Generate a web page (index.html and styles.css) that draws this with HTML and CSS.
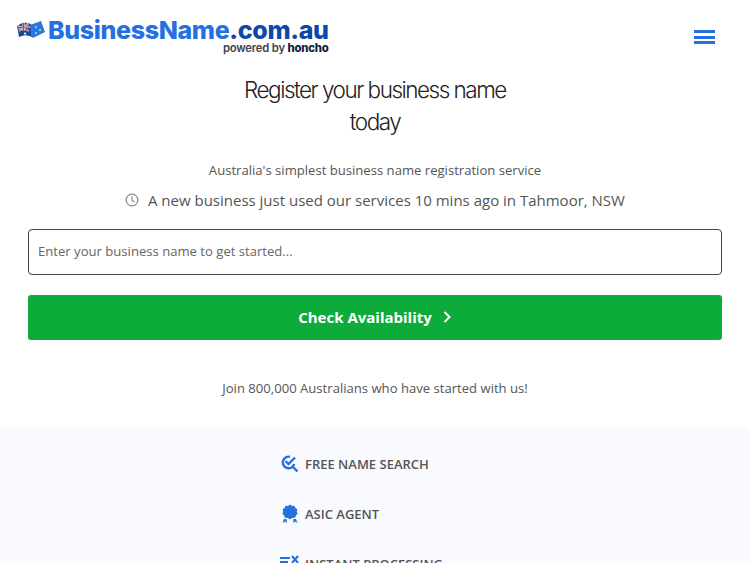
FILE: index.html
```html
<!DOCTYPE html>
<html lang="en">
<head>
    <meta charset="UTF-8">
    <title>BusinessName.com.au</title>
    <link rel="stylesheet" href="styles.css">
</head>
<body>
    <header class="topbar">
        <a class="logo" href="#">
            <svg class="flag" width="29" height="20" viewBox="0 0 29 20">
                <path d="M1 6 L6 3 Q10 2 15 4 L16 17 Q10 14 6 16 L3 17 Z" fill="#17498f"/>
                <path d="M14 5 L25 1 L29 12 L17 18 L15 16 Z" fill="#2a78d8"/>
                <path d="M2 6 L13 11 M13 3 L3 11" stroke="#e8e8ee" stroke-width="1.8"/>
                <path d="M2 6 L13 11 M13 3 L3 11" stroke="#d23040" stroke-width="0.8"/>
                <path d="M7.5 3 L7.5 11 M2 7.5 L14 7" stroke="#e8e8ee" stroke-width="2.2"/>
                <path d="M7.5 3 L7.5 11 M2 7.5 L14 7" stroke="#d23040" stroke-width="1.2"/>
                <circle cx="9" cy="13.5" r="1.1" fill="#fff"/>
                <circle cx="20" cy="7" r="0.9" fill="#cfe2fa"/>
                <circle cx="24" cy="10" r="0.9" fill="#cfe2fa"/>
                <circle cx="20" cy="13" r="0.9" fill="#cfe2fa"/>
            </svg>
            <span class="logo-text">
                <span class="logo-name">BusinessName<b>.com.au</b></span>
                <span class="logo-sub">powered by <b>honcho</b></span>
            </span>
        </a>
        <a class="menu-btn" href="#"><span></span><span></span><span></span></a>
    </header>

    <section class="hero">
        <h1>Register your business name<br>today</h1>
        <p class="lead">Australia's simplest business name registration service</p>
        <p class="recent">
            <svg width="14" height="14" viewBox="0 0 14 14" fill="none" stroke="#8a8a8a" stroke-width="1.2">
                <circle cx="7" cy="7" r="5.9"/>
                <path d="M7 3.2 V7.2 L9.6 8.9"/>
            </svg>
            A new business just used our services 10 mins ago in Tahmoor, NSW
        </p>
        <form class="search">
            <input type="text" placeholder="Enter your business name to get started...">
            <button type="button">Check Availability
                <svg width="10" height="14" viewBox="0 0 10 14" fill="none" stroke="#fff" stroke-width="2">
                    <path d="M2.5 2 L7.5 7 L2.5 12"/>
                </svg>
            </button>
        </form>
        <p class="join">Join 800,000 Australians who have started with us!</p>
    </section>

    <section class="features">
        <ul>
            <li>
                <svg width="18" height="18" viewBox="0 0 18 18" fill="none" stroke="#2470e0" stroke-width="2.4">
                    <path d="M9 1.8 A5.8 5.8 0 1 0 13.2 9"/>
                    <path d="M4.5 6 L7.5 9 L14 2.5"/>
                    <path d="M11.5 11.5 L16.5 16.5"/>
                </svg>
                FREE NAME SEARCH
            </li>
            <li>
                <svg width="18" height="20" viewBox="0 0 18 20" fill="#2470e0">
                    <path d="M9 0.5 L11 2 L13.4 1.8 L14.4 4 L16.4 5.2 L15.8 7.6 L16.6 9.8 L14.8 11.4 L14.2 13.8 L11.8 13.8 L9 15.2 L6.2 13.8 L3.8 13.8 L3.2 11.4 L1.4 9.8 L2.2 7.6 L1.6 5.2 L3.6 4 L4.6 1.8 L7 2 Z"/>
                    <path d="M3 15 L5.5 15 L6 19 L4 17.5 L1.5 19 Z M12.5 15 L15 15 L16.5 19 L14 17.5 L12 19 Z"/>
                </svg>
                ASIC AGENT
            </li>
            <li>
                <svg class="wide-icon" width="20" height="18" viewBox="0 0 20 18" fill="none" stroke="#2470e0" stroke-width="2">
                    <path d="M0 3 H10 M0 7 H8 M2 11 H8"/>
                    <path d="M12 1 L18 8 M18 1 L12 8"/>
                </svg>
                INSTANT PROCESSING
            </li>
        </ul>
    </section>
</body>
</html>
```

FILE: styles.css
```css
html, body { margin: 0; padding: 0; height: 563px; overflow: hidden; }
body { font-family: "Open Sans", "Noto Sans", sans-serif; color: #555; background: #fff; }

.topbar { display: flex; justify-content: space-between; align-items: flex-start; height: 74px; padding: 17px 35px 0 16px; box-sizing: border-box; }
.logo { display: flex; align-items: flex-start; gap: 3px; text-decoration: none; }
.flag { margin-top: 3px; }
.logo-text { display: flex; flex-direction: column; align-items: flex-end; }
.logo-name { font-family: Inter, sans-serif; font-weight: 800; font-size: 25px; line-height: 26px; color: #2470e0; letter-spacing: -0.35px; }
.logo-name b { color: #0c48a8; font-weight: 800; }
.logo-sub { font-family: Inter, sans-serif; font-weight: 600; font-size: 11.3px; line-height: 11px; color: #444; letter-spacing: -0.2px; }
.logo-sub b { color: #13203f; font-weight: 800; }

.menu-btn { display: flex; flex-direction: column; gap: 2.5px; width: 21px; margin-top: 13px; }
.menu-btn span { display: block; height: 3px; background: #2470e0; }

.hero { padding: 0 28px; text-align: center; }
h1 { margin: 0; font-family: Inter, "Liberation Sans", sans-serif; font-weight: 300; font-size: 22.5px; line-height: 32px; color: #222; letter-spacing: -1.5px; }
.lead { margin: 22px 0 0; font-size: 13.1px; line-height: 20px; }
.recent { margin: 9px 0 0; font-size: 15px; line-height: 22px; color: #555; }
.recent svg { vertical-align: -1px; margin-right: 5px; }

.search { margin-top: 18px; display: flex; flex-direction: column; gap: 20px; }
.search input { height: 46px; box-sizing: border-box; padding: 0 9px 2px; border: 1px solid #444; border-radius: 4px; font-family: inherit; font-size: 13.1px; color: #555; background: #fff; }
.search input::placeholder { color: #666; opacity: 1; }
.search button { display: flex; justify-content: center; align-items: center; gap: 10px; height: 45px; padding: 0 0 2px; border: 0; border-radius: 3px; background: #0cab3a; color: #fff; font-family: inherit; font-weight: 700; font-size: 15px; }
.join { margin: 38px 0 0; font-size: 13.1px; line-height: 20px; }

.features { margin-top: 30px; height: 135px; background: #f9fafd; }
.features ul { list-style: none; margin: 0; padding: 25px 0 0 281px; }
.features li { display: flex; align-items: center; gap: 6px; height: 22px; margin-bottom: 28px; font-size: 13px; font-weight: 600; color: #555; }
.features svg { flex: none; }
.features .wide-icon { margin: 0 -1px; }
```
